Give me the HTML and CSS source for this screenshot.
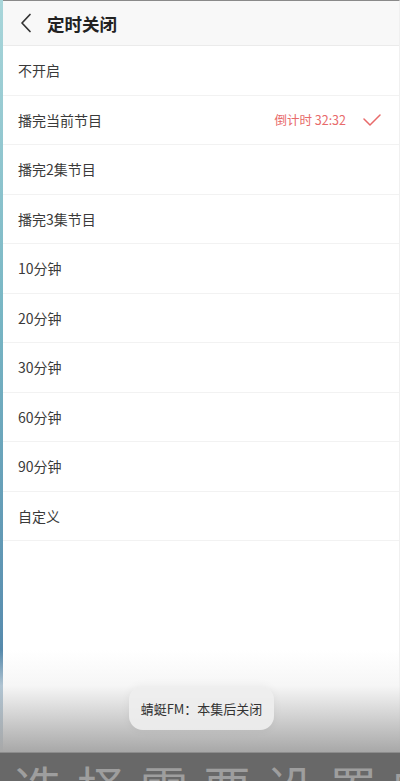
FILE: index.html
```html
<!DOCTYPE html>
<html lang="zh-CN">
<head>
    <meta charset="UTF-8">
    <meta name="viewport" content="width=device-width, initial-scale=1.0">
    <title>定时关闭</title>
    <link rel="stylesheet" href="styles.css">
</head>
<body>
    <div class="screen">
        <div class="edge"></div>
        <div class="main">
            <header class="title-bar">
                <svg class="back" width="14" height="20" viewBox="0 0 14 20">
                    <polyline points="11,1.5 3,10 11,18.5" fill="none" stroke="#333" stroke-width="1.7" stroke-linecap="round" stroke-linejoin="round"/>
                </svg>
                <h1>定时关闭</h1>
            </header>
            <ul class="options">
                <li>不开启</li>
                <li class="active">
                    <span>播完当前节目</span>
                    <span class="countdown">倒计时 32:32</span>
                    <svg class="check" width="18" height="14" viewBox="0 0 18 14">
                        <polyline points="1,6 7,12 17,2" fill="none" stroke="#e86a6a" stroke-width="1.5" stroke-linecap="round" stroke-linejoin="round"/>
                    </svg>
                </li>
                <li>播完2集节目</li>
                <li>播完3集节目</li>
                <li>10分钟</li>
                <li>20分钟</li>
                <li>30分钟</li>
                <li>60分钟</li>
                <li>90分钟</li>
                <li>自定义</li>
            </ul>
        </div>
        <div class="fade"></div>
        <div class="toast">蜻蜓FM：本集后关闭</div>
        <div class="caption">选择需要设置的</div>
    </div>
</body>
</html>
```

FILE: styles.css
```css
body {
    margin: 0;
    font-family: "Noto Sans CJK SC", "Noto Sans", sans-serif;
    color: #333;
    background: #fff;
}

.screen {
    position: relative;
    width: 400px;
    height: 781px;
    overflow: hidden;
    display: flex;
}

.edge {
    width: 3px;
    background: linear-gradient(180deg, #a9d6da 0%, #78b6c4 40%, #5a8fb0 80%, #3f6d93 100%);
}

.main {
    flex: 1;
    display: flex;
    flex-direction: column;
    border-top: 1px solid #8a8a8a;
    border-right: 1px solid #f0f0f0;
}

.title-bar {
    height: 44px;
    display: flex;
    align-items: center;
    gap: 14px;
    padding-left: 16px;
    background: #f8f8f8;
    border-bottom: 1px solid #ebebeb;
}

.title-bar h1 {
    margin: 0;
    font-size: 17.5px;
    font-weight: bold;
    color: #222;
}

.options {
    list-style: none;
    margin: 0;
    padding: 0;
}

.options li {
    height: 48.5px;
    display: flex;
    align-items: center;
    padding-left: 15px;
    padding-right: 18px;
    font-size: 14px;
    color: #3a3a3a;
    border-bottom: 1px solid #f2f2f2;
}

.options li.active span:first-child {
    flex: 1;
}

.countdown {
    font-size: 12.5px;
    color: #e86a6a;
    margin-right: 17px;
}

.check {
    margin-top: 1px;
}

.fade {
    position: absolute;
    left: 0;
    right: 0;
    top: 650px;
    height: 102px;
    background: linear-gradient(180deg, rgba(255, 255, 255, 0) 0%, rgba(240, 240, 240, 0.6) 35%, rgba(168, 168, 168, 1) 100%);
}

.toast {
    position: absolute;
    left: 129px;
    top: 686px;
    width: 145px;
    height: 44px;
    display: flex;
    align-items: center;
    justify-content: center;
    border-radius: 14px;
    background: rgba(238, 238, 238, 0.92);
    box-shadow: 0 0 10px rgba(0, 0, 0, 0.05);
    font-size: 13px;
    color: #333;
}

.caption {
    position: absolute;
    left: 0;
    right: 0;
    top: 752px;
    height: 29px;
    padding-left: 14px;
    background: #686868;
    color: #9e9e9e;
    font-size: 48px;
    letter-spacing: 15px;
    line-height: 1;
    padding-top: 9px;
    white-space: nowrap;
    box-sizing: border-box;
    border-top: 1px solid #8c8c8c;
}
```
